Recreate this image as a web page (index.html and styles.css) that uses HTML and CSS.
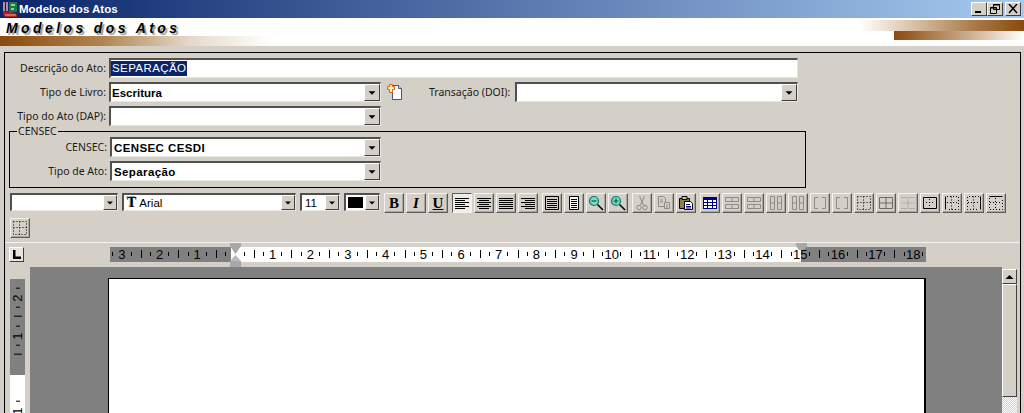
FILE: index.html
```html
<!DOCTYPE html>
<html lang="pt-BR">
<head>
    <meta charset="UTF-8">
    <title>Modelos dos Atos</title>
    <link rel="stylesheet" href="styles.css">
</head>
<body>
    <svg class="defs" width="0" height="0">
        <symbol id="al-left" viewBox="0 0 16 16"><path d="M1 3.5h14M1 5.5h10M1 7.5h14M1 9.5h10M1 11.5h14M1 13.5h10" stroke="#000"/></symbol>
        <symbol id="al-center" viewBox="0 0 16 16"><path d="M1 3.5h14M3 5.5h10M1 7.5h14M3 9.5h10M1 11.5h14M3 13.5h10" stroke="#000"/></symbol>
        <symbol id="al-just" viewBox="0 0 16 16"><path d="M1 3.5h14M1 5.5h14M1 7.5h14M1 9.5h14M1 11.5h14M1 13.5h14" stroke="#000"/></symbol>
        <symbol id="al-right" viewBox="0 0 16 16"><path d="M1 3.5h14M5 5.5h10M1 7.5h14M5 9.5h10M1 11.5h14M5 13.5h10" stroke="#000"/></symbol>
        <symbol id="page-wide" viewBox="0 0 16 16"><path d="M1.5 1.5h13v13h-13z" fill="none" stroke="#000"/><path d="M3 4.5h10M3 6.5h10M3 8.5h10M3 10.5h10M3 12.5h10" stroke="#000"/></symbol>
        <symbol id="page-narrow" viewBox="0 0 16 16"><path d="M3.5 1.5h9v13h-9z" fill="#fff" stroke="#000"/><path d="M5 4.5h6M5 6.5h6M5 8.5h6M5 10.5h6M5 12.5h6" stroke="#000"/></symbol>
        <symbol id="zoom-out" viewBox="0 0 16 16"><circle cx="6" cy="6" r="4.5" fill="#7fd6c8" stroke="#087878" stroke-width="1.2"/><path d="M3.5 6h5" stroke="#063" stroke-width="1.2"/><path d="M9.5 9.5l5.5 5.5" stroke="#000" stroke-width="1.6"/></symbol>
        <symbol id="zoom-in" viewBox="0 0 16 16"><circle cx="6" cy="6" r="4.5" fill="#7fd6c8" stroke="#087878" stroke-width="1.2"/><path d="M3.5 6h5M6 3.5v5" stroke="#063" stroke-width="1.2"/><path d="M9.5 9.5l5.5 5.5" stroke="#000" stroke-width="1.6"/></symbol>
        <symbol id="cut" viewBox="0 0 16 16"><path d="M5.5 1l4 9M10.5 1l-4 9" stroke="#8f8c84" fill="none"/><circle cx="5" cy="12.5" r="2.2" fill="none" stroke="#8f8c84"/><circle cx="11" cy="12.5" r="2.2" fill="none" stroke="#8f8c84"/></symbol>
        <symbol id="copy" viewBox="0 0 16 16"><path d="M2.5 1.5h5l2 2v8h-7z" fill="none" stroke="#8f8c84"/><path d="M8.5 7.5h5v6h-5z" fill="#d4d0c8" stroke="#8f8c84"/><path d="M4 5h3M4 7h3M10 10h2M10 12h2" stroke="#8f8c84"/></symbol>
        <symbol id="paste" viewBox="0 0 16 16"><path d="M1.5 3.5h10v10h-10z" fill="#85824c" stroke="#000"/><path d="M4 1.5h5v3H4z" fill="#c8c8a0" stroke="#000"/><path d="M6.5 6.5h6l2 2v6h-8z" fill="#fff" stroke="#000"/><path d="M8 9.500h4M8 11.500h5M8 13h5" stroke="#000082"/></symbol>
        <symbol id="table" viewBox="0 0 16 16"><path d="M1 2h14v12H1z" fill="#000082"/><path d="M2 5h3v2H2zM6 5h4v2H6zM11 5h3v2h-3zM2 8h3v2H2zM6 8h4v2H6zM11 8h3v2h-3zM2 11h3v2H2zM6 11h4v2H6zM11 11h3v2h-3z" fill="#fff"/></symbol>
        <symbol id="rows-a" viewBox="0 0 16 16"><path d="M1.500 2.500h13v4h-13zM1.500 9.500h13v4h-13zM8 2.500v4M8 9.500v4" fill="none" stroke="#8f8c84"/></symbol>
        <symbol id="cols-a" viewBox="0 0 16 16"><path d="M2.500 1.500h4v13h-4zM9.500 1.500h4v13h-4zM2.500 8h4M9.500 8h4" fill="none" stroke="#8f8c84"/></symbol>
        <symbol id="bracket" viewBox="0 0 16 16"><path d="M6 2.500H2.500v11H6M10 2.500h3.500v11H10" fill="none" stroke="#8f8c84"/></symbol>
        <symbol id="grid-dots" viewBox="0 0 16 16"><path d="M1.500 1.500h13v13h-13zM7.500 1.500v13M1.500 7.500h13" fill="none" stroke="#000" stroke-dasharray="1 2"/></symbol>
        <symbol id="grid-plain" viewBox="0 0 16 16"><path d="M1.500 2.500h13v11h-13zM8 2.500v11M1.500 8h13" fill="none" stroke="#6e6c66"/></symbol>
        <symbol id="grid-split" viewBox="0 0 16 16"><path d="M1.500 2.500h5M9.500 2.500h5M1.500 13.500h5M9.500 13.500h5M1.500 8h13M8 2.500v11" fill="none" stroke="#8f8c84" stroke-dasharray="1 1"/></symbol>
        <symbol id="grid-box" viewBox="0 0 16 16"><path d="M1.500 2.500h13v11h-13z" fill="none" stroke="#000"/><path d="M7.500 4v8M4 7.500h8" stroke="#000" stroke-dasharray="1 2"/></symbol>
        <symbol id="grid-left" viewBox="0 0 16 16"><path d="M1.500 1.500v13" stroke="#000"/><path d="M3 1.500h11.500v13H3M7.500 1.500v13M3 7.500h11" fill="none" stroke="#000" stroke-dasharray="1 2"/></symbol>
        <symbol id="grid-right" viewBox="0 0 16 16"><path d="M14.500 1.500v13" stroke="#000"/><path d="M13 1.500H1.500v13H13M7.500 1.500v13M2 7.500h11" fill="none" stroke="#000" stroke-dasharray="1 2"/></symbol>
        <symbol id="grid-top" viewBox="0 0 16 16"><path d="M1.500 1.500h13" stroke="#000"/><path d="M1.500 3v11.500h13V3M7.500 3v11M2 7.500h12" fill="none" stroke="#000" stroke-dasharray="1 2"/></symbol>
        <symbol id="arrow" viewBox="0 0 16 16"><path d="M4 6h8l-4 4z" fill="#000"/></symbol>
    </svg>

    <div class="app">
        <div class="titlebar">
            <svg class="app-icon" width="16" height="17" viewBox="0 0 16 17">
                <path d="M1 1h2v9H1zM4 1h2v9H4z" fill="#b58a9a"/>
                <path d="M7 1h8v10H7z" fill="#1c7a3c"/>
                <path d="M9 3h4v2H9zM9 7h3v2H9z" fill="#8fd0a0"/>
                <path d="M1 10l9 1 5 2v3H3l-2-2z" fill="#b02020"/>
                <path d="M3 14h11" stroke="#e8b0a0"/>
            </svg>
            <span class="title-text">Modelos dos Atos</span>
            <div class="win-buttons">
                <div class="win-btn"><svg width="12" height="10" viewBox="0 0 12 10"><path d="M2 7h6v2H2z"/></svg></div>
                <div class="win-btn"><svg width="12" height="10" viewBox="0 0 12 10"><path d="M4.500 .5h6v5h-6zM1.500 3.500h6v6h-6z" fill="#d4d0c8" stroke="#000"/><path d="M4 1h7M1 4h7" stroke="#000"/></svg></div>
                <div class="win-btn win-close"><svg width="12" height="10" viewBox="0 0 12 10"><path d="M2 0l8 9M10 0l-8 9" stroke="#000" stroke-width="1.5"/></svg></div>
            </div>
        </div>

        <div class="banner"><span class="banner-text">Modelos dos Atos</span></div>

        <div class="frame">
            <div class="form">
                <div class="row">
                    <label class="lbl">Descrição do Ato:</label>
                    <div class="field field-long"><span class="selected">SEPARAÇÃO</span></div>
                </div>
                <div class="row">
                    <label class="lbl">Tipo de Livro:</label>
                    <div class="field combo combo-main"><span class="val">Escritura</span><span class="drop"><svg width="16" height="16"><use href="#arrow"/></svg></span></div>
                    <svg class="new-icon" width="16" height="18" viewBox="0 0 16 18">
                        <path d="M5.500 2.500h6l3 3v11h-9z" fill="#fff" stroke="#3a5a80"/>
                        <path d="M11.500 2.500v3h3" fill="#cdd6e0" stroke="#3a5a80"/>
                        <path d="M2.500 1.500h3v2h2v3h-2v3h-3v-3h-2v-3h2z" fill="#fdf0c0" stroke="#e06010"/>
                    </svg>
                    <label class="lbl lbl-doi">Transação (DOI):</label>
                    <div class="field combo combo-doi"><span class="val"></span><span class="drop"><svg width="16" height="16"><use href="#arrow"/></svg></span></div>
                </div>
                <div class="row">
                    <label class="lbl">Tipo do Ato (DAP):</label>
                    <div class="field combo combo-main"><span class="val"></span><span class="drop"><svg width="16" height="16"><use href="#arrow"/></svg></span></div>
                </div>

                <fieldset class="group">
                    <legend class="group-title">CENSEC</legend>
                    <div class="row">
                        <label class="lbl lbl-group">CENSEC:</label>
                        <div class="field combo combo-group"><span class="val val-wide">CENSEC CESDI</span><span class="drop"><svg width="16" height="16"><use href="#arrow"/></svg></span></div>
                    </div>
                    <div class="row">
                        <label class="lbl lbl-group">Tipo de Ato:</label>
                        <div class="field combo combo-group"><span class="val val-wide">Separação</span><span class="drop"><svg width="16" height="16"><use href="#arrow"/></svg></span></div>
                    </div>
                </fieldset>
            </div>

            <div class="toolbar">
                <div class="field combo tool-style"><span class="val"></span><span class="drop drop-sm"><svg width="14" height="14" viewBox="0 0 16 16"><use href="#arrow"/></svg></span></div>
                <div class="field combo tool-font"><span class="font-t">T</span><span class="font-name">Arial</span><span class="drop drop-sm"><svg width="14" height="14" viewBox="0 0 16 16"><use href="#arrow"/></svg></span></div>
                <div class="field combo tool-size"><span class="font-name">11</span><span class="drop drop-sm"><svg width="14" height="14" viewBox="0 0 16 16"><use href="#arrow"/></svg></span></div>
                <div class="field combo tool-color"><span class="swatch"></span><span class="drop drop-sm"><svg width="14" height="14" viewBox="0 0 16 16"><use href="#arrow"/></svg></span></div>

                <div class="btn btn-b">B</div>
                <div class="btn btn-i">I</div>
                <div class="btn btn-u">U</div>
                <div class="btn sep pressed"><svg width="16" height="16"><use href="#al-left"/></svg></div>
                <div class="btn"><svg width="16" height="16"><use href="#al-center"/></svg></div>
                <div class="btn"><svg width="16" height="16"><use href="#al-just"/></svg></div>
                <div class="btn"><svg width="16" height="16"><use href="#al-right"/></svg></div>
                <div class="btn sep"><svg width="16" height="16"><use href="#page-wide"/></svg></div>
                <div class="btn"><svg width="16" height="16"><use href="#page-narrow"/></svg></div>
                <div class="btn"><svg width="16" height="16"><use href="#zoom-out"/></svg></div>
                <div class="btn"><svg width="16" height="16"><use href="#zoom-in"/></svg></div>
                <div class="btn sep"><svg width="16" height="16"><use href="#cut"/></svg></div>
                <div class="btn"><svg width="16" height="16"><use href="#copy"/></svg></div>
                <div class="btn"><svg width="16" height="16"><use href="#paste"/></svg></div>
                <div class="btn sep"><svg width="16" height="16"><use href="#table"/></svg></div>
                <div class="btn"><svg width="16" height="16"><use href="#rows-a"/></svg></div>
                <div class="btn"><svg width="16" height="16"><use href="#rows-a"/></svg></div>
                <div class="btn"><svg width="16" height="16"><use href="#cols-a"/></svg></div>
                <div class="btn"><svg width="16" height="16"><use href="#cols-a"/></svg></div>
                <div class="btn"><svg width="16" height="16"><use href="#bracket"/></svg></div>
                <div class="btn"><svg width="16" height="16"><use href="#bracket"/></svg></div>
                <div class="btn"><svg width="16" height="16"><use href="#grid-dots"/></svg></div>
                <div class="btn"><svg width="16" height="16"><use href="#grid-plain"/></svg></div>
                <div class="btn"><svg width="16" height="16"><use href="#grid-split"/></svg></div>
                <div class="btn"><svg width="16" height="16"><use href="#grid-box"/></svg></div>
                <div class="btn"><svg width="16" height="16"><use href="#grid-left"/></svg></div>
                <div class="btn"><svg width="16" height="16"><use href="#grid-right"/></svg></div>
                <div class="btn"><svg width="16" height="16"><use href="#grid-top"/></svg></div>
                <div class="btn"><svg width="16" height="16"><use href="#grid-dots"/></svg></div>
            </div>

            <div class="ruler-row">
                <div class="tab-stop"><svg width="11" height="11" viewBox="0 0 11 11"><path d="M2 1h2.500v6.500H10V10H2z"/></svg></div>
                <div class="ruler">
                    <div class="scale">
                        <span class="cm">3</span><span class="cm">2</span><span class="cm">1</span><span class="cm"></span>
                        <span class="cm">1</span><span class="cm">2</span><span class="cm">3</span><span class="cm">4</span>
                        <span class="cm">5</span><span class="cm">6</span><span class="cm">7</span><span class="cm">8</span>
                        <span class="cm">9</span><span class="cm">10</span><span class="cm">11</span><span class="cm">12</span>
                        <span class="cm">13</span><span class="cm">14</span><span class="cm">15</span><span class="cm">16</span>
                        <span class="cm">17</span><span class="cm">18</span>
                    </div>
                    <svg class="marker-left" width="11" height="24" viewBox="0 0 11 24">
                        <path d="M0 0h11v3L5.500 11 0 3z" fill="#a8a8a8"/>
                        <path d="M5.500 12L11 18H0z" fill="#b8b8b8"/>
                        <path d="M0 18h11v6H0z" fill="#a8a8a8"/>
                    </svg>
                    <svg class="marker-right" width="11" height="8" viewBox="0 0 11 8">
                        <path d="M0 0h11v3L8 7H3L0 3z" fill="#a8a8a8"/>
                    </svg>
                </div>
            </div>

            <div class="workspace">
                <div class="vruler-col">
                    <div class="vruler">
                        <span class="vcm">2</span><span class="vcm">1</span><span class="vcm"></span><span class="vcm">1</span>
                    </div>
                </div>
                <div class="desk"><div class="page"></div></div>
                <div class="scrollbar">
                    <div class="scroll-up"><svg width="13" height="12" viewBox="0 0 13 12"><path d="M2.500 8h8l-4-4z" fill="#000"/></svg></div>
                    <div class="scroll-thumb"></div>
                    <div class="scroll-track"></div>
                </div>
            </div>
        </div>
    </div>
</body>
</html>
```

FILE: styles.css
```css
html, body {
    margin: 0;
    padding: 0;
    height: 413px;
    overflow: hidden;
    background-color: #d4d0c8;
    font-family: "Noto Sans", "Liberation Sans", sans-serif;
    font-size: 10.500px;
    color: #1a1a1a;
}

.defs {
    position: absolute;
}

.app {
    height: 413px;
    display: flex;
    flex-direction: column;
    overflow: hidden;
}

/* title bar */
.titlebar {
    height: 18px;
    flex: none;
    display: flex;
    align-items: center;
    background: linear-gradient(to right, #0a246a, #a6caf0);
}

.app-icon {
    margin-left: 2px;
}

.title-text {
    margin-left: 1px;
    color: #fff;
    font-weight: bold;
    font-family: "Liberation Sans", sans-serif;
    font-size: 11.500px;
}

.win-buttons {
    margin-left: auto;
    margin-right: 3px;
    display: flex;
}

.win-btn {
    width: 14px;
    height: 12px;
    display: flex;
    align-items: center;
    justify-content: center;
    background: #d4d0c8;
    border: 1px solid;
    border-color: #fff #404040 #404040 #fff;
}

.win-close {
    margin-left: 2px;
}

/* banner with the brown fades */
.banner {
    height: 28px;
    flex: none;
    background-color: #fff;
    background-image:
        linear-gradient(to right, #fff, #e6d5c2 22%, #a87a48 70%, #8a4a0c),
        linear-gradient(to right, #8a4a0c, #c9a988 55%, #fff),
        linear-gradient(to right, #8a4a0c, #b08550 38%, #e5d8c8 70%, #fff);
    background-repeat: no-repeat;
    background-size: 164px 11px, 130px 10px, 270px 10px;
    background-position: 860px 2px, 894px 12px, 0 18px;
}

.banner-text {
    display: block;
    margin: 2px 0 0 6px;
    font-family: "Liberation Sans", sans-serif;
    font-size: 14px;
    line-height: 16px;
    font-weight: bold;
    font-style: italic;
    letter-spacing: 3.400px;
    color: #000;
    text-shadow: 2px 2px 1px #999;
}

/* main frame */
.frame {
    flex: 1;
    min-height: 0;
    margin: 6px 3px 0 4px;
    border: 1px solid #000;
    border-bottom: none;
    display: flex;
    flex-direction: column;
}

.form {
    padding-top: 5px;
    flex: none;
}

.row {
    display: flex;
    align-items: center;
    height: 20px;
    margin-bottom: 4px;
}

.lbl {
    width: 101px;
    flex: none;
    margin-right: 3px;
    text-align: right;
    white-space: nowrap;
}

.lbl-doi {
    width: 81px;
    margin-left: 26px;
    margin-right: 5px;
}

.lbl-group {
    width: 97px;
}

.field {
    height: 20px;
    box-sizing: border-box;
    background: #fff;
    border-top: 2px solid #505050;
    border-left: 2px solid #505050;
    border-right: 1px solid #e8e6e0;
    border-bottom: 1px solid #e8e6e0;
    display: flex;
    align-items: center;
    color: #000;
    font-family: "Liberation Sans", sans-serif;
    font-size: 11.500px;
}

.field-long {
    width: 689px;
}

.selected {
    background: #0a246a;
    color: #fff;
    padding: 0 1px;
    line-height: 15px;
    letter-spacing: 0.400px;
}

.combo {
    justify-content: space-between;
}

.combo-main {
    width: 272px;
}

.combo-doi {
    width: 283px;
}

.combo-group {
    width: 271px;
}

.val {
    padding-left: 1px;
    font-weight: bold;
}

.val-wide {
    padding-left: 2px;
    letter-spacing: 0.400px;
}

.drop {
    width: 16px;
    height: 17px;
    box-sizing: border-box;
    flex: none;
    display: flex;
    align-items: center;
    justify-content: center;
    background: #d4d0c8;
    border: 1px solid;
    border-color: #fff #404040 #404040 #fff;
}

.new-icon {
    margin-left: 6px;
    flex: none;
}

.group {
    width: 797px;
    box-sizing: border-box;
    margin: -5px 0 0 4px;
    padding: 0 0 2px 0;
    border: 1px solid #000;
    min-inline-size: 0;
}

.group-title {
    margin-left: 7px;
    padding: 0 1px;
    line-height: 12px;
}

/* formatting toolbar */
.toolbar {
    margin: 5px 0 0 5px;
    display: flex;
    flex-wrap: wrap;
    align-items: flex-start;
    gap: 5px 2px;
    flex: none;
}

.tool-style {
    width: 108px;
    height: 18px;
    margin-right: 2px;
}

.tool-font {
    width: 174px;
    height: 18px;
    margin-right: 2px;
}

.tool-size {
    width: 40px;
    height: 18px;
    margin-right: 2px;
}

.tool-color {
    width: 36px;
    height: 18px;
    margin-right: 2px;
}

.drop-sm {
    width: 14px;
    height: 15px;
}

.font-t {
    margin-left: 3px;
    font-family: "Liberation Serif", serif;
    font-size: 14px;
    font-weight: bold;
    text-shadow: -1px -1px 0 #aaa;
}

.font-name {
    margin-left: 3px;
    margin-right: auto;
    font-size: 11.500px;
}

.swatch {
    width: 15px;
    height: 11px;
    margin-left: 2px;
    background: #000;
}

.btn {
    width: 20px;
    height: 20px;
    box-sizing: border-box;
    flex: none;
    display: flex;
    align-items: center;
    justify-content: center;
    background: #d4d0c8;
    border: 1px solid;
    border-color: #f4f3ef #5e5c56 #5e5c56 #f4f3ef;
    box-shadow: inset -1px -1px 0 #a8a69e;
    color: #000;
    font-family: "Liberation Serif", serif;
    font-size: 15px;
    font-weight: bold;
}

.btn-i {
    font-style: italic;
}

.btn-u {
    text-decoration: underline;
}

.btn.sep {
    margin-left: 2px;
}

.pressed {
    border-color: #5e5c56 #f4f3ef #f4f3ef #5e5c56;
    box-shadow: none;
    background-color: #eeedea;
}

/* rulers */
.ruler-row {
    flex: none;
    height: 25px;
    margin-top: 4px;
    border-top: 1px solid #f4f3ef;
    display: flex;
    align-items: flex-start;
    padding: 4px 0 0 4px;
    box-sizing: border-box;
}

.tab-stop {
    width: 15px;
    height: 15px;
    box-sizing: border-box;
    flex: none;
    display: flex;
    align-items: center;
    justify-content: center;
    background: #e6e4de;
    border: 1px solid;
    border-color: #fff #404040 #404040 #fff;
}

.ruler {
    position: relative;
    width: 816px;
    height: 15px;
    margin-left: 86px;
    background: linear-gradient(to right, #808080 121px, #fff 121px, #fff 691px, #808080 691px);
}

.scale {
    height: 15px;
    display: flex;
    overflow: hidden;
}

.cm {
    flex: 0 0 37.700px;
    height: 15px;
    text-align: center;
    color: #000;
    font-family: "Liberation Sans", sans-serif;
    font-size: 13px;
    line-height: 15px;
    background-image:
        linear-gradient(#000, #000),
        linear-gradient(#000, #000),
        linear-gradient(#000, #000);
    background-repeat: no-repeat;
    background-size: 1px 8px, 1px 4px, 1px 4px;
    background-position: 0 3px, 25% 5px, 75% 5px;
}

.cm:first-child {
    margin-left: -7px;
}

.marker-left {
    position: absolute;
    left: 120px;
    top: -4px;
}

.marker-right {
    position: absolute;
    left: 686px;
    top: -4px;
}

.workspace {
    flex: 1;
    min-height: 0;
    display: flex;
}

.vruler-col {
    width: 25px;
    flex: none;
    padding: 12px 0 0 5px;
    box-sizing: border-box;
}

.vruler {
    width: 15px;
    height: 134px;
    overflow: hidden;
    background: linear-gradient(to bottom, #808080 96px, #fff 96px);
}

.vcm {
    display: flex;
    align-items: center;
    justify-content: center;
    height: 37.700px;
    writing-mode: vertical-rl;
    transform: rotate(180deg);
    color: #000;
    font-family: "Liberation Sans", sans-serif;
    font-size: 13px;
    background-image:
        linear-gradient(#000, #000),
        linear-gradient(#000, #000),
        linear-gradient(#000, #000);
    background-repeat: no-repeat;
    background-size: 8px 1px, 4px 1px, 4px 1px;
    background-position: 3px 0, 5px 25%, 5px 75%;
}

.desk {
    flex: 1;
    min-width: 0;
    display: flex;
    background: #808080;
    padding: 11px 0 0 78px;
}

.page {
    width: 815px;
    flex: none;
    background: #fff;
    border-top: 1px solid #000;
    border-left: 1px solid #000;
    border-right: 2px solid #000;
}

.scrollbar {
    width: 15px;
    flex: none;
    margin: 2px 3px 0 0;
    display: flex;
    flex-direction: column;
    background: #808080;
}

.scroll-up {
    height: 15px;
    flex: none;
    display: flex;
    align-items: center;
    justify-content: center;
    box-sizing: border-box;
    background: #d4d0c8;
    border: 1px solid;
    border-color: #fff #404040 #404040 #fff;
}

.scroll-thumb {
    height: 113px;
    flex: none;
    box-sizing: border-box;
    background: #d4d0c8;
    border: 1px solid;
    border-color: #fff #404040 #404040 #fff;
}

.scroll-track {
    flex: 1;
    background: repeating-conic-gradient(#fff 0 25%, #d4d0c8 0 50%) 0 0 / 2px 2px;
}
```
